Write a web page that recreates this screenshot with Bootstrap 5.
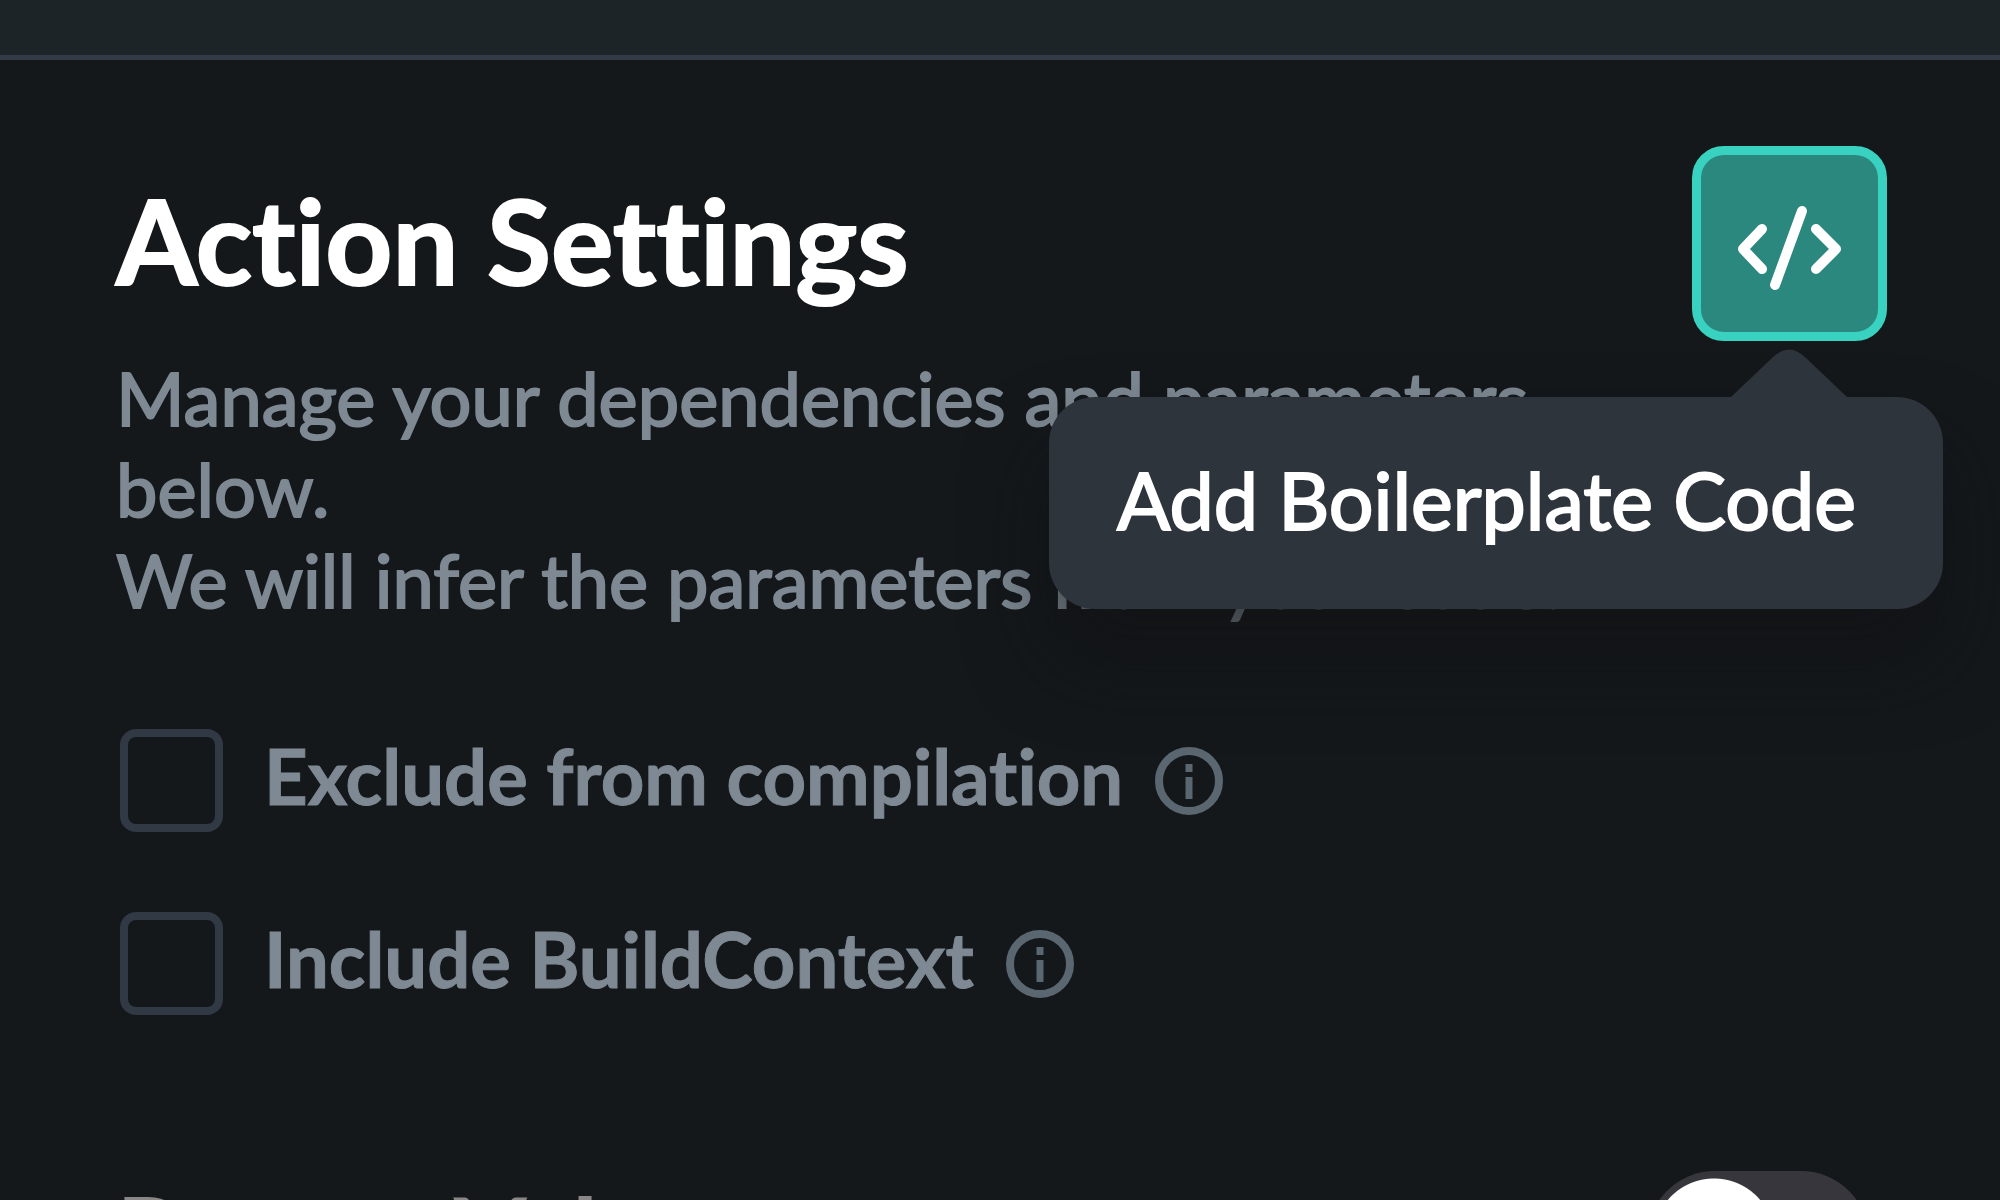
<!DOCTYPE html>
<html lang="en">
<head>
<meta charset="utf-8">
<meta name="viewport" content="width=device-width, initial-scale=1">
<title>Action Settings</title>
<link href="https://cdn.jsdelivr.net/npm/bootstrap@5.3.0/dist/css/bootstrap.min.css" rel="stylesheet">
<style>
body { background: #14181b; color: #7e8993; font-family: Lato, "Liberation Sans", sans-serif; font-variant-ligatures: none; }
.top-strip { height: 60px; background: #1d2428; border-bottom: 5px solid #323b46; }
.settings-panel { padding: 86px 113px 0 116px; }
.panel-title { font-size: 117px; line-height: 120px; font-weight: 700; color: #fff; margin: 34px 0 52px; -webkit-text-stroke: 2px #fff; }
.panel-text { font-size: 74px; line-height: 91px; -webkit-text-stroke: 2px #7e8993; }
.code-btn { width: 195px; height: 195px; border: 9px solid #39d2c0; border-radius: 32px; background: #2b887e; }
.code-btn:hover { border-color: #39d2c0; background: #2b887e; }
.code-tip { top: 251px; right: -56px; padding: 57px 87px 63px 68px; border-radius: 46px; background: #2e343c; color: #fff; font-size: 79px; line-height: 92px; -webkit-text-stroke: 2px #fff; box-shadow: 0 50px 80px rgba(16, 17, 19, .6); }
.tip-arrow { right: 96px; bottom: 100%; -webkit-text-stroke: 0; }
.option-list { margin-top: 104px; gap: 80px; }
.option-row { gap: 32px; padding-left: 4px; }
.option-row .form-check-input { width: 103px; height: 103px; border: 8px solid #303944; border-radius: 16px; background-color: transparent; }
.option-label { font-size: 76px; line-height: 92px; font-weight: 700; padding: 0 0 9px 9px; -webkit-text-stroke: 1px #7e8993; }
.section-row { margin-top: 156px; }
.section-label { font-size: 105px; line-height: 125px; font-weight: 700; color: #8b8787; }
.value-switch .form-check-input { width: 222px; height: 136px; border: 0; margin: 0 18px 0 0; border-radius: 68px; background-color: #36363c; background-image: radial-gradient(circle at 67px 68px, #fff 60px, transparent 61px); background-size: 100% 100%; background-position: 0 0; }
.value-switch .form-check-input:checked { background-image: radial-gradient(circle at 155px 68px, #fff 60px, transparent 61px); background-color: #39d2c0; }
</style>
<script src="https://cdn.jsdelivr.net/npm/bootstrap@5.3.0/dist/js/bootstrap.bundle.min.js"></script>
</head>
<body>
<div class="vh-100 overflow-hidden">
  <header class="top-strip"></header>
  <main class="settings-panel">
    <div class="d-flex align-items-start justify-content-between gap-4">
      <div class="flex-grow-1">
        <h1 class="panel-title">Action Settings</h1>
        <p class="panel-text mb-0">Manage your dependencies and parameters below.<br>We will infer the parameters from your code.</p>
      </div>
      <div class="position-relative flex-shrink-0">
        <button type="button" class="btn code-btn p-0 d-flex align-items-center justify-content-center" aria-label="Add Boilerplate Code" aria-describedby="code-tip">
          <svg width="106" height="92" viewBox="0 -8 106 92" fill="none" stroke="#fff" stroke-width="10" stroke-linecap="round" stroke-linejoin="round" aria-hidden="true">
            <path d="M25 23 6 43l19 20M79 23l20 20-20 20M65 5 38 79"/>
          </svg>
        </button>
        <div id="code-tip" role="tooltip" class="code-tip position-absolute text-nowrap">
          <svg class="tip-arrow position-absolute" width="116" height="48" viewBox="0 0 116 48" aria-hidden="true"><path fill="#2e343c" d="M0 48 41 9Q58-8 75 9l41 39z"/></svg>
          Add Boilerplate Code
        </div>
      </div>
    </div>
    <div class="option-list d-flex flex-column">
      <div class="option-row d-flex align-items-center">
        <input class="form-check-input m-0 flex-shrink-0" type="checkbox" id="exclude">
        <label class="option-label" for="exclude">Exclude from compilation</label>
        <svg width="68" height="68" viewBox="0 0 68 68" fill="none" stroke="#5a6670" stroke-width="8" aria-hidden="true"><circle cx="34" cy="34" r="30"/><path stroke-width="7" d="M34 30v22M34 17v8"/></svg>
      </div>
      <div class="option-row d-flex align-items-center">
        <input class="form-check-input m-0 flex-shrink-0" type="checkbox" id="context">
        <label class="option-label" for="context">Include BuildContext</label>
        <svg width="68" height="68" viewBox="0 0 68 68" fill="none" stroke="#5a6670" stroke-width="8" aria-hidden="true"><circle cx="34" cy="34" r="30"/><path stroke-width="7" d="M34 30v22M34 17v8"/></svg>
      </div>
    </div>
    <div class="section-row d-flex justify-content-between align-items-start">
      <label class="section-label" for="return-value">Return Value</label>
      <div class="form-switch value-switch p-0"><input class="form-check-input float-none" type="checkbox" role="switch" id="return-value"></div>
    </div>
  </main>
</div>
</body>
</html>
